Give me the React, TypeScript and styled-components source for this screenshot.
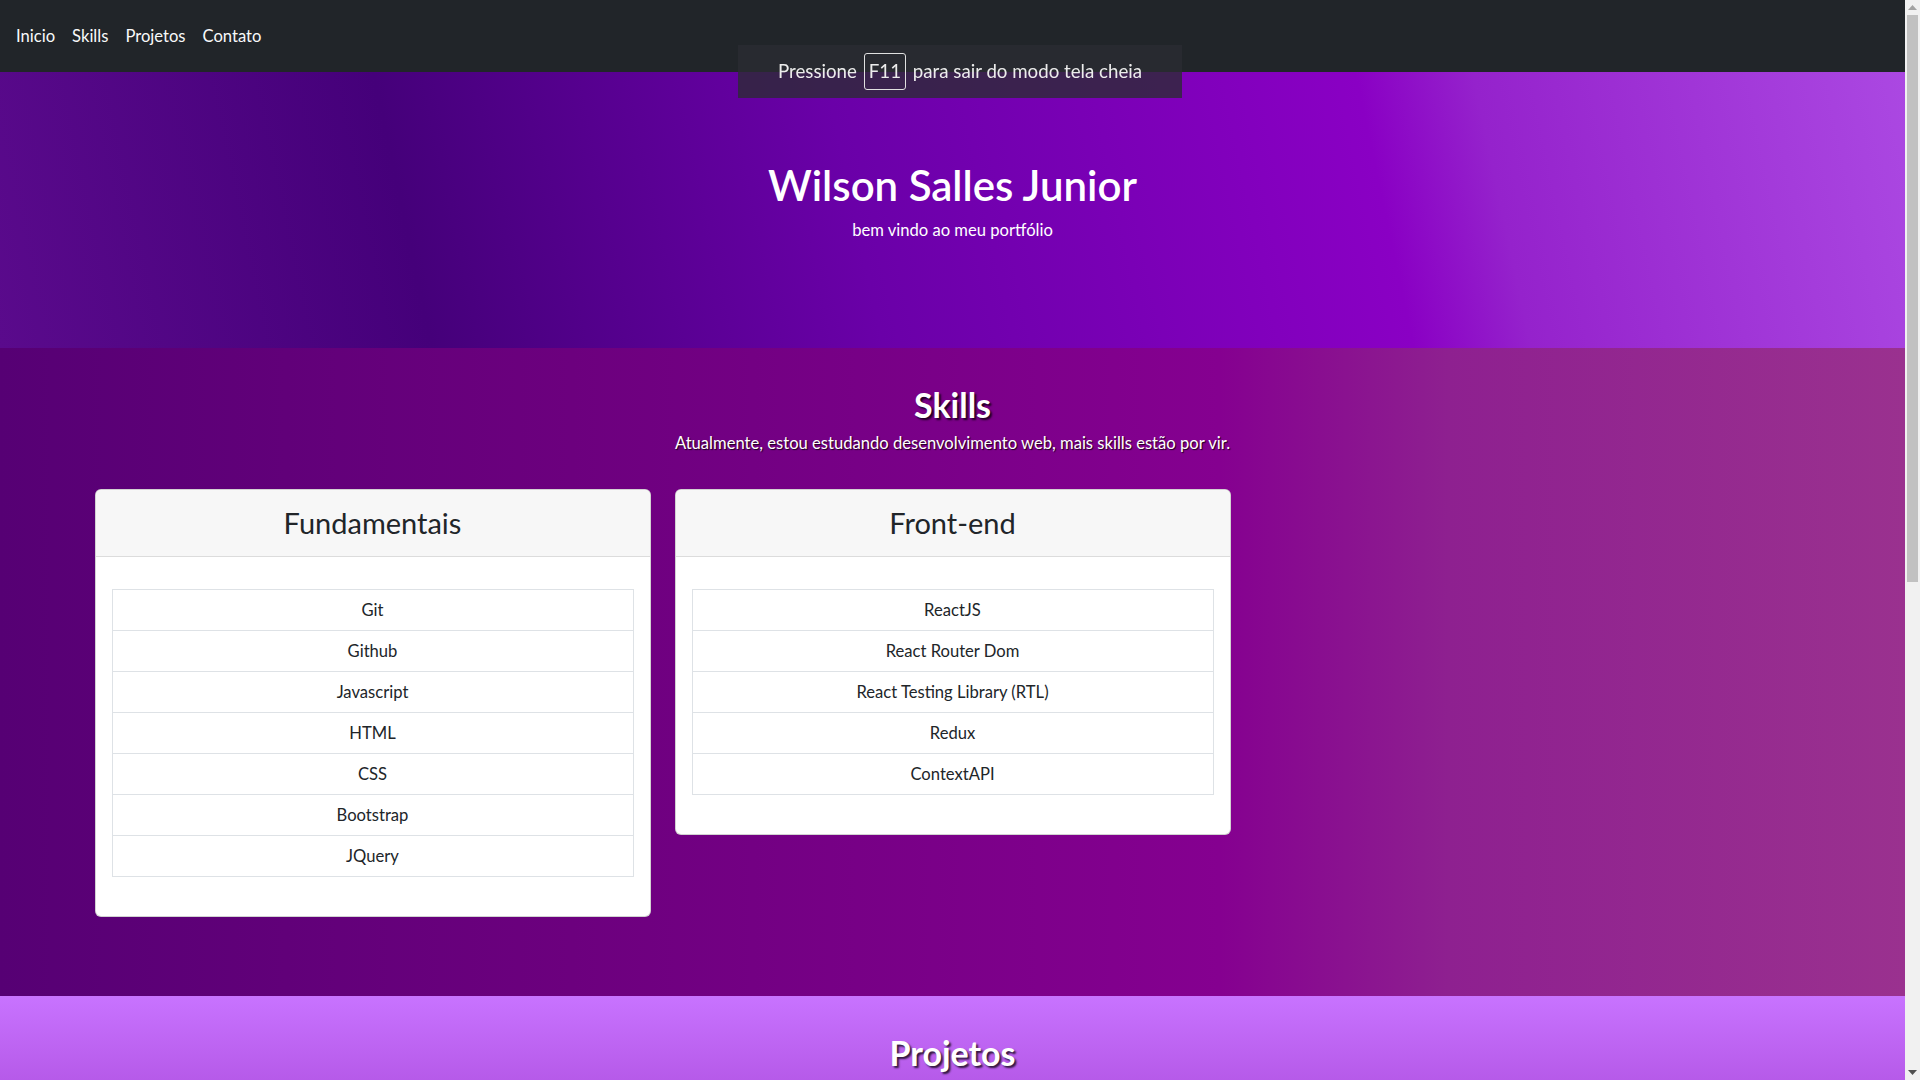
import React from "react";
import styled, { createGlobalStyle } from "styled-components";

const FONT = `"Lato", "Noto Sans", "Liberation Sans", sans-serif`;

const GlobalStyle = createGlobalStyle`
  html, body {
    margin: 0;
    padding: 0;
    height: 100%;
    overflow: hidden;
  }
  body {
    font-family: ${FONT};
    font-size: 16.6px;
    line-height: 1.5;
    color: #212529;
    background: #ffffff;
  }
  *, *::before, *::after { box-sizing: border-box; }
`;

const Window = styled.div`
  height: 100vh;
  display: grid;
  grid-template-columns: 1fr 15px;
  overflow: hidden;
`;

const Main = styled.main`
  min-width: 0;
  overflow: hidden;
`;

const ScrollRail = styled.div`
  background: #f1f1f1;
  display: flex;
  flex-direction: column;
  height: 100vh;
`;

const ScrollButton = styled.div`
  height: 15px;
  flex: none;
  display: flex;
  align-items: center;
  justify-content: center;
`;

const ScrollTrack = styled.div`
  flex: 1;
  display: flex;
  flex-direction: column;
`;

const ScrollThumb = styled.div<{ $size: number }>`
  height: ${(p) => p.$size}px;
  margin: 0 2px;
  background: #c1c1c1;
`;

const Navbar = styled.nav`
  height: 72px;
  background: #212529;
  display: flex;
  align-items: center;
  padding: 0 16px;
  gap: 17px;
`;

const NavLink = styled.a`
  color: #f8f9fa;
  font-size: 16.6px;
  text-decoration: none;
  line-height: 24px;
`;

const FullscreenNotice = styled.div`
  position: fixed;
  top: 45px;
  left: 738px;
  width: 444px;
  height: 53px;
  background: rgba(42, 43, 50, 0.78);
  color: #ececec;
  font-size: 18.7px;
  display: flex;
  align-items: center;
  justify-content: center;
  gap: 6px;
  z-index: 10;
`;

const Key = styled.span`
  display: inline-flex;
  align-items: center;
  justify-content: center;
  width: 42px;
  height: 37px;
  border: 1px solid #e0e0e0;
  border-radius: 3px;
  margin: 0 1px;
`;

const Hero = styled.header`
  height: 276px;
  background: linear-gradient(
    78deg,
    #5a0a8c 0%,
    #45007a 22%,
    #6a00a8 45%,
    #8a00c4 72%,
    #9522cc 78%,
    #ab48e2 100%
  );
  color: #ffffff;
  text-align: center;
  padding-top: 87px;
`;

const HeroTitle = styled.h1`
  margin: 0;
  font-size: 42px;
  font-weight: 600;
  line-height: 53px;
`;

const HeroSubtitle = styled.p`
  margin: 6px 0 0;
  font-size: 16.6px;
  line-height: 24px;
`;

const Section = styled.section<{ $bg: string; $minHeight?: number }>`
  background: ${(p) => p.$bg};
  padding: 38px 0 79px;
  text-align: center;
  min-height: ${(p) => (p.$minHeight ? `${p.$minHeight}px` : "auto")};
`;

const SectionTitle = styled.h2`
  margin: 0;
  color: #ffffff;
  font-size: 34px;
  font-weight: 700;
  line-height: 38px;
  text-shadow: 2px 2px 2px rgba(0, 0, 0, 0.75);
`;

const SectionSubtitle = styled.p`
  margin: 7px 0 0;
  color: #ffffff;
  font-size: 16.6px;
  line-height: 24px;
  text-shadow: 1px 1px 1px rgba(0, 0, 0, 0.8);
`;

const CardGrid = styled.div`
  margin-top: 34px;
  display: grid;
  grid-template-columns: repeat(3, 556px);
  gap: 24px;
  justify-content: center;
  align-items: start;
`;

const Card = styled.div`
  background: #ffffff;
  border: 1px solid rgba(0, 0, 0, 0.175);
  border-radius: 6px;
  overflow: hidden;
`;

const CardHeader = styled.div`
  background: #f7f7f7;
  border-bottom: 1px solid #dcdcdc;
  height: 67px;
  display: flex;
  align-items: center;
  justify-content: center;
`;

const CardTitle = styled.h3`
  margin: 0;
  font-size: 29px;
  font-weight: 400;
  line-height: 38px;
  color: #212529;
`;

const CardBody = styled.div`
  padding: 32px 16px 39px;
`;

const List = styled.ul`
  list-style: none;
  margin: 0;
  padding: 0;
  border: 1px solid #dee2e6;
`;

const ListItem = styled.li`
  padding: 8px 16px;
  line-height: 24px;
  font-size: 16.6px;
  color: #212529;
  text-align: center;
  & + & {
    border-top: 1px solid #dee2e6;
  }
`;

const skillGroups = [
  {
    title: "Fundamentais",
    items: ["Git", "Github", "Javascript", "HTML", "CSS", "Bootstrap", "JQuery"],
  },
  {
    title: "Front-end",
    items: [
      "ReactJS",
      "React Router Dom",
      "React Testing Library (RTL)",
      "Redux",
      "ContextAPI",
    ],
  },
];

const Arrow = ({ up }: { up?: boolean }) => (
  <svg width="9" height="5" viewBox="0 0 9 5" aria-hidden="true">
    {up ? (
      <polygon points="0,5 9,5 4.5,0" fill="#a3a3a3" />
    ) : (
      <polygon points="0,0 9,0 4.5,5" fill="#505050" />
    )}
  </svg>
);

export default function App() {
  return (
    <Window>
      <GlobalStyle />
      <Main>
        <Navbar>
          <NavLink href="#inicio">Inicio</NavLink>
          <NavLink href="#skills">Skills</NavLink>
          <NavLink href="#projetos">Projetos</NavLink>
          <NavLink href="#contato">Contato</NavLink>
        </Navbar>
        <Hero id="inicio">
          <HeroTitle>Wilson Salles Junior</HeroTitle>
          <HeroSubtitle>bem vindo ao meu portfólio</HeroSubtitle>
        </Hero>
        <Section
          id="skills"
          $bg="linear-gradient(90deg, #560074 0%, #6c007e 30%, #850090 64%, #8e2090 76%, #9a318f 100%)"
        >
          <SectionTitle>Skills</SectionTitle>
          <SectionSubtitle>
            Atualmente, estou estudando desenvolvimento web, mais skills estão por vir.
          </SectionSubtitle>
          <CardGrid>
            {skillGroups.map((g) => (
              <Card key={g.title}>
                <CardHeader>
                  <CardTitle>{g.title}</CardTitle>
                </CardHeader>
                <CardBody>
                  <List>
                    {g.items.map((it) => (
                      <ListItem key={it}>{it}</ListItem>
                    ))}
                  </List>
                </CardBody>
              </Card>
            ))}
          </CardGrid>
        </Section>
        <Section
          id="projetos"
          $minHeight={1004}
          $bg="linear-gradient(180deg, #c873ff 0px, #b65ae9 84px, #a548d8 300px, #9a3ccc 100%)"
        >
          <SectionTitle>Projetos</SectionTitle>
        </Section>
      </Main>
      <ScrollRail>
        <ScrollButton>
          <Arrow up />
        </ScrollButton>
        <ScrollTrack>
          <ScrollThumb $size={567} />
        </ScrollTrack>
        <ScrollButton>
          <Arrow />
        </ScrollButton>
      </ScrollRail>
      <FullscreenNotice>
        Pressione <Key>F11</Key> para sair do modo tela cheia
      </FullscreenNotice>
    </Window>
  );
}
